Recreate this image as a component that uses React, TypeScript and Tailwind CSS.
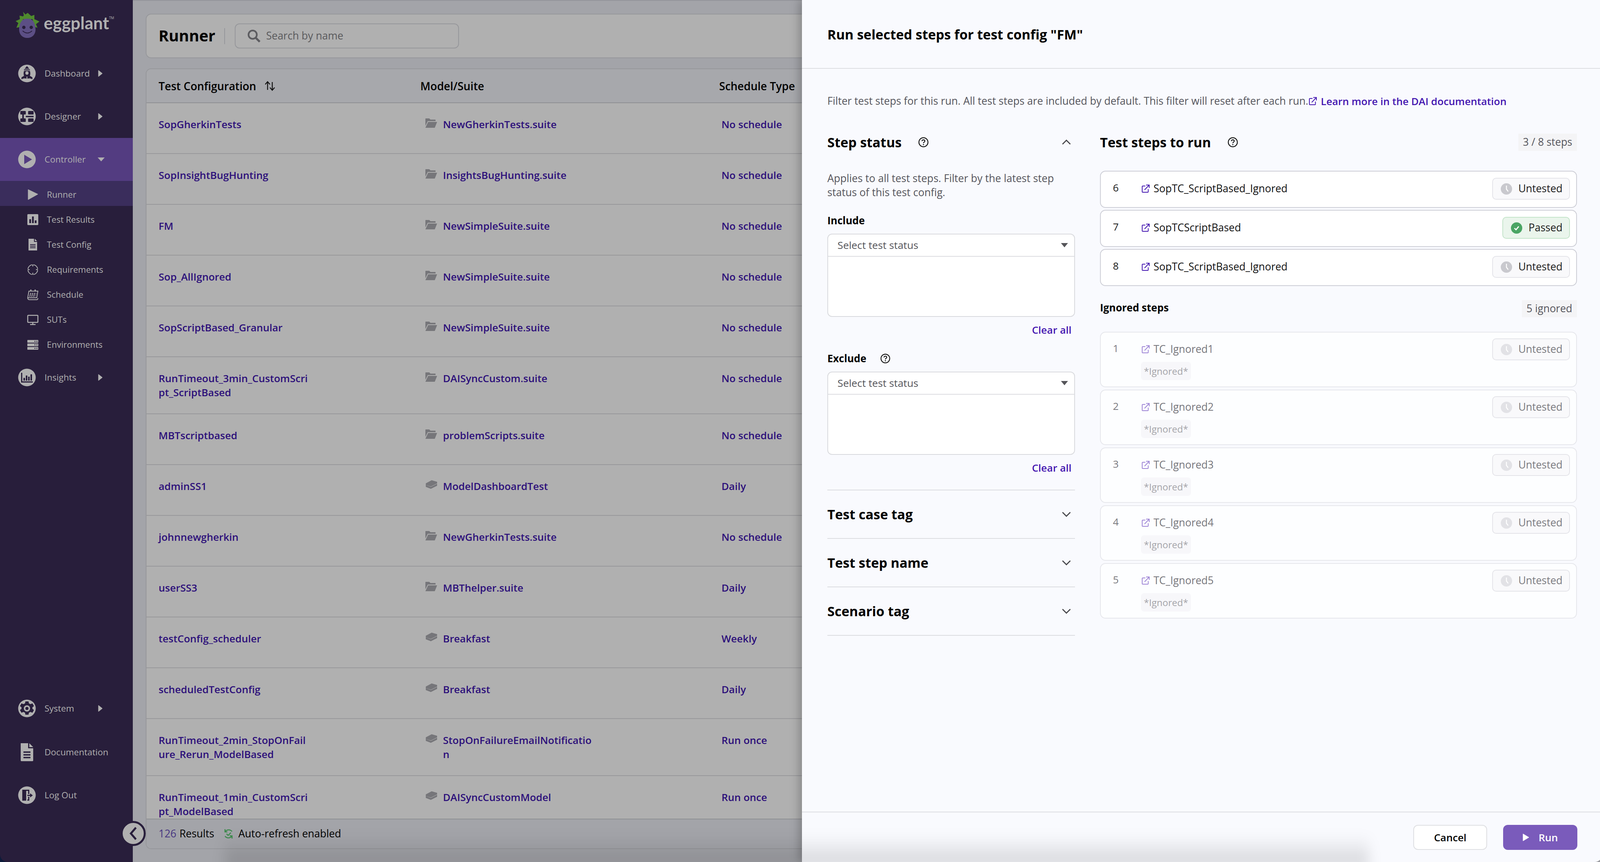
import React from "react";

const LINK = "text-[#2c0f7a]";
const rows: { a: React.ReactNode; icon: "folder" | "box"; b: React.ReactNode; c: string; tall?: boolean }[] = [
  { a: "SopGherkinTests", icon: "folder", b: "NewGherkinTests.suite", c: "No schedule" },
  { a: "SopInsightBugHunting", icon: "folder", b: "InsightsBugHunting.suite", c: "No schedule" },
  { a: "FM", icon: "folder", b: "NewSimpleSuite.suite", c: "No schedule" },
  { a: "Sop_AllIgnored", icon: "folder", b: "NewSimpleSuite.suite", c: "No schedule" },
  { a: "SopScriptBased_Granular", icon: "folder", b: "NewSimpleSuite.suite", c: "No schedule" },
  { a: <>RunTimeout_3min_CustomScri<br />pt_ScriptBased</>, icon: "folder", b: "DAISyncCustom.suite", c: "No schedule", tall: true },
  { a: "MBTscriptbased", icon: "folder", b: "problemScripts.suite", c: "No schedule" },
  { a: "adminSS1", icon: "box", b: "ModelDashboardTest", c: "Daily" },
  { a: "johnnewgherkin", icon: "folder", b: "NewGherkinTests.suite", c: "No schedule" },
  { a: "userSS3", icon: "folder", b: "MBThelper.suite", c: "Daily" },
  { a: "testConfig_scheduler", icon: "box", b: "Breakfast", c: "Weekly" },
  { a: "scheduledTestConfig", icon: "box", b: "Breakfast", c: "Daily" },
  { a: <>RunTimeout_2min_StopOnFail<br />ure_Rerun_ModelBased</>, icon: "box", b: <>StopOnFailureEmailNotificatio<br />n</>, c: "Run once", tall: true },
  { a: <>RunTimeout_1min_CustomScri<br />pt_ModelBased</>, icon: "box", b: "DAISyncCustomModel", c: "Run once", tall: true },
];

const G = "#b0b0b0";
const D = "#281e3b";

function Tri() {
  return (
    <svg width="12" height="18" viewBox="0 0 12 18"><path d="M1 1 L11 9 L1 17 Z" fill={G} stroke={G} strokeLinejoin="round" /></svg>
  );
}

function MainIcon({ name }: { name: string }) {
  const bg = name === "controller" ? "#533c81" : D;
  return (
    <svg width="46" height="46" viewBox="0 0 46 46">
      {name !== "doc" && <circle cx="23" cy="23" r="22.5" fill={G} />}
      {name === "rocket" && (
        <g fill={bg}>
          <path d="M23 4 L29 11 H17 Z" />
          <rect x="15.5" y="12.5" width="15" height="2.4" />
          <path d="M15.5 16.5 h15 C32 21 32 25 30.5 29 L37 33 V38 C32 35.5 29 35 27 36 H19 C17 35 14 35.5 9 38 V33 L15.5 29 C14 25 14 21 15.5 16.5 Z" />
          <circle cx="23" cy="22" r="4.2" fill={G} />
          <rect x="22" y="31" width="2" height="7" fill={G} />
        </g>
      )}
      {name === "designer" && (
        <g fill={bg}>
          <rect x="6" y="9" width="14" height="9" rx="1.5" />
          <rect x="26" y="9" width="14" height="9" rx="1.5" />
          <rect x="6" y="28" width="14" height="9" rx="1.5" />
          <rect x="26" y="28" width="14" height="9" rx="1.5" />
          <rect x="11" y="18" width="4" height="10" />
          <rect x="20" y="21.5" width="20" height="3.5" />
        </g>
      )}
      {name === "controller" && <path d="M16 11 L36 23 L16 35 Z" fill={bg} />}
      {name === "insights" && (
        <g fill={bg}>
          <path d="M8 11 h3 v22 h27 v3 H8 Z" />
          <rect x="14" y="24" width="4" height="7" />
          <rect x="20" y="18" width="4" height="13" />
          <rect x="26" y="21" width="4" height="10" />
          <rect x="32" y="15" width="4" height="16" />
        </g>
      )}
      {name === "gear" && (
        <g>
          <path fill={bg} d="M19 5 h8 l1 5 4 2 5-2 4 7-4 3 v4 l4 3-4 7-5-2-4 2-1 5 h-8 l-1-5-4-2-5 2-4-7 4-3 v-4 l-4-3 4-7 5 2 4-2 Z" />
          <circle cx="23" cy="23" r="8" fill={G} />
          <circle cx="23" cy="23" r="4" fill={bg} />
        </g>
      )}
      {name === "doc" && (
        <g>
          <path fill={G} d="M7 0 H26 V13 H39 V44 a2 2 0 0 1-2 2 H9 a2 2 0 0 1-2-2 Z" />
          <path fill={G} d="M29 0 L39 10 H29 Z" />
          <rect x="14" y="21" width="18" height="3.5" fill={D} />
          <rect x="14" y="28" width="18" height="3.5" fill={D} />
          <rect x="14" y="35" width="18" height="3.5" fill={D} />
        </g>
      )}
      {name === "logout" && (
        <g fill={bg}>
          <path d="M11 9 H29 V20 H26 V12 H21 V37 L11 37 Z" />
          <path d="M26 27 H29 V37 H24 V34 H26 Z" />
          <path d="M24 22 H31 V18 L38 23.5 L31 29 V25 H24 Z" />
        </g>
      )}
    </svg>
  );
}

function SubIcon({ name }: { name: string }) {
  const cls = "w-[30px] h-[30px]";
  if (name === "run")
    return <svg className={cls} viewBox="0 0 30 30"><path d="M3 2 L28 14 L3 28 Z" fill={G} stroke={G} strokeLinejoin="round" /></svg>;
  if (name === "results")
    return <svg className={cls} viewBox="0 0 30 30"><rect x="1" y="1" width="28" height="28" rx="2" fill={G} /><rect x="6" y="14" width="4.5" height="10" fill={D} /><rect x="13" y="7" width="4.5" height="17" fill={D} /><rect x="20" y="17" width="4.5" height="7" fill={D} /></svg>;
  if (name === "config")
    return <svg className={cls} viewBox="0 0 30 30"><path d="M4 0 H18 V8 H26 V30 H4 Z" fill={G} /><path d="M20 0 L26 6 H20 Z" fill={G} /><rect x="8" y="14" width="14" height="2" fill={D} /><rect x="8" y="18" width="14" height="2" fill={D} /><rect x="8" y="22" width="14" height="2" fill={D} /></svg>;
  if (name === "req")
    return <svg className={cls} viewBox="0 0 30 30" fill="none" stroke={G} strokeWidth="2"><circle cx="15" cy="15" r="12.5" /><path d="M15 0 V6 M15 24 V30 M0 15 H6 M24 15 H30" stroke={D} strokeWidth="3" /><path d="M15 2 V7 M15 23 V28 M2 15 H7 M23 15 H28" /></svg>;
  if (name === "sched")
    return <svg className={cls} viewBox="0 0 30 30" fill="none" stroke={G} strokeWidth="2"><path d="M5 6 H28 L25 23 H2 Z" /><path d="M10 2 V7 M21 2 V7" strokeWidth="3" /><path d="M2 23 Q2 28 7 28 H25 Q28 28 28 24" /><path d="M8 12 h16 M7 15.5 h16 M6 19 h16" strokeDasharray="3 2" strokeWidth="2.4" /></svg>;
  if (name === "suts")
    return <svg className={cls} viewBox="0 0 30 30" fill="none" stroke={G} strokeWidth="2.5"><rect x="2" y="4" width="26" height="18" rx="1.5" /><path d="M15 22 V27 M8 27.5 H22" /></svg>;
  return (
    <svg className={cls} viewBox="0 0 30 30">
      {[3, 12, 21].map((y) => (
        <g key={y}>
          <rect x="1" y={y} width="28" height="7" rx="1" fill={G} />
          <rect x="19" y={y + 2.5} width="3" height="2" fill={D} />
          <rect x="24" y={y + 2.5} width="3" height="2" fill={D} />
        </g>
      ))}
    </svg>
  );
}

function MainItem({ icon, label, arrow, active, h = "h-[110px]" }: { icon: string; label: string; arrow?: "right" | "down"; active?: boolean; h?: string }) {
  return (
    <div className={`relative flex items-center ${h} pl-[46px] ${active ? "bg-[#533c81]" : ""}`}>
      <MainIcon name={icon} />
      <span className="ml-[22px] text-[22.5px] font-normal text-[#b0b0b0]">{label}</span>
      {arrow === "right" && <span className="absolute left-[251px] top-1/2 -translate-y-1/2 flex"><Tri /></span>}
      {arrow === "down" && (
        <svg className="absolute left-[250px] top-1/2 -translate-y-1/2" width="18" height="10" viewBox="0 0 18 10"><path d="M0 0 H18 L9 10 Z" fill={G} /></svg>
      )}
    </div>
  );
}

function SubItem({ icon, label, active }: { icon: string; label: string; active?: boolean }) {
  return (
    <div className={`flex items-center h-[64px] pl-[69px] pt-[5px] ${active ? "bg-[#3a2d5c]" : ""}`}>
      <SubIcon name={icon} />
      <span className="ml-[21px] text-[22px] text-[#b0b0b0]">{label}</span>
    </div>
  );
}

function Sidebar() {
  return (
    <aside className="relative w-[340px] shrink-0 h-full bg-[#281e3b] flex flex-col justify-between rounded-bl-[20px]">
      <div>
        <div className="h-[133px] flex items-start pl-[39px] pt-[29px]">
          <svg width="64" height="70" viewBox="0 0 64 70">
            <path fill="#4f8a2e" d="M20 1 L26 8 L32 4 L41 12 L49 9 L49 20 L62 26 L53 33 L57 42 L50 40 L44 20 H20 L14 40 L3 42 L8 30 L1 25 L12 20 L11 11 L20 13 L22 10 Z" />
            <path fill="#5c4f85" d="M31 19 C44 17 52 30 52 46 C52 60 43 68 31 68 C19 68 10 60 10 46 C10 30 18 17 31 19 Z" />
            <circle cx="22" cy="41" r="4.3" fill={D} />
            <circle cx="41" cy="41" r="4.3" fill={D} />
            <path d="M19 50 Q31 61 43 50" fill="none" stroke={D} strokeWidth="2" />
          </svg>
          <span className="ml-[9px] mt-[-3px] font-['Lato'] font-bold text-[43.5px] leading-[64px] text-[#b0b0b0]">eggplant</span>
          <span className="text-[9px] text-[#b0b0b0] mt-[10px]">TM</span>
        </div>
        <MainItem icon="rocket" label="Dashboard" arrow="right" />
        <MainItem icon="designer" label="Designer" arrow="right" />
        <MainItem icon="controller" label="Controller" arrow="down" active />
        <SubItem icon="run" label="Runner" active />
        <SubItem icon="results" label="Test Results" />
        <SubItem icon="config" label="Test Config" />
        <SubItem icon="req" label="Requirements" />
        <SubItem icon="sched" label="Schedule" />
        <SubItem icon="suts" label="SUTs" />
        <SubItem icon="env" label="Environments" />
        <MainItem icon="insights" label="Insights" arrow="right" />
      </div>
      <div className="pb-[116px]">
        <MainItem icon="gear" label="System" arrow="right" h="h-[114px]" />
        <MainItem icon="doc" label="Documentation" h="h-[110px]" />
        <MainItem icon="logout" label="Log Out" h="h-[110px]" />
      </div>
    </aside>
  );
}

function ItemIcon({ kind }: { kind: "folder" | "box" }) {
  if (kind === "folder")
    return (
      <svg width="32" height="26" viewBox="0 0 32 26">
        <path d="M1 2 a1 1 0 0 1 1-1 H11 L14 4 H26 a1 1 0 0 1 1 1 V8 H7 L1 20 Z" fill="#76767a" />
        <path d="M8 10 H31 L25 25 H1 Z" fill="#76767a" />
      </svg>
    );
  return (
    <svg width="32" height="24" viewBox="0 0 32 24">
      <path d="M2 9 L17 1 L31 5 L31 9 L15 17 L2 13 Z" fill="#76767a" />
      <path d="M2 13 L15 18 L31 10 V15 L15 23 L2 18 Z" fill="#76767a" />
    </svg>
  );
}

function Background() {
  return (
    <main className="flex-1 h-full bg-[#a3a4a9] border-t-2 border-[#93949a] pt-[33px] pl-[33px] flex flex-col gap-[26px] min-w-0 overflow-hidden">
      <section className="h-[114px] shrink-0 rounded-l-[14px] bg-[#b0b0b0] border-2 border-r-0 border-[#96979b] flex items-center pl-[31px]">
        <h1 className="text-[39.5px] font-bold text-black leading-none">Runner</h1>
        <div className="ml-[23px] w-[2px] h-[41px] bg-[#96979b]" />
        <div className="ml-[25px] w-[574px] h-[64px] rounded-[12px] border-2 border-[#96979b] flex items-center pl-[30px]">
          <svg width="34" height="34" viewBox="0 0 32 32" fill="none" stroke="#5c5c60" strokeWidth="4"><circle cx="13" cy="13" r="10" /><path d="M21 21 L30 30" strokeWidth="5" /></svg>
          <span className="ml-[14px] text-[26.5px] text-[#59595c]">Search by name</span>
        </div>
      </section>
      <section className="h-[1998px] shrink-0 rounded-l-[14px] border-2 border-r-0 border-[#96979b] bg-[#b0b0b0] flex flex-col overflow-hidden">
        <div className="h-[87px] shrink-0 flex items-center bg-[#a7a8ac] border-b-2 border-[#8f9094] text-[28px] font-semibold text-black">
          <div className="w-[701px] pl-[31px] flex items-center">
            <span>Test Configuration</span>
            <svg className="ml-[20px]" width="30" height="30" viewBox="0 0 30 30" fill="none" stroke="#111" strokeWidth="2.4"><path d="M9 25 V5 M3 11 L9 4 L15 11" /><path d="M21 5 V25 M15 19 L21 26 L27 19" /></svg>
          </div>
          <div className="w-[765px]">Model/Suite</div>
          <div>Schedule Type</div>
        </div>
        <div className="flex-1 min-h-0 overflow-hidden">
          {rows.map((r, i) => (
            <div key={i} className={`flex items-start border-b-2 border-[#98989b] pt-[36px] text-[26px] font-semibold leading-[36px] ${LINK} ${r.tall ? "h-[146px]" : "h-[130px]"}`}>
              <div className="w-[701px] pl-[31px]">{r.a}</div>
              <div className="w-[771px] pl-[12px] flex items-start">
                <span className="w-[46px] shrink-0 pt-[2px]"><ItemIcon kind={r.icon} /></span>
                <span>{r.b}</span>
              </div>
              <div>{r.c}</div>
            </div>
          ))}
        </div>
        <div className="h-[76px] shrink-0 bg-[#a3a4a9] border-t-2 border-[#8f9094] flex items-center pl-[31px] text-[26.5px] font-medium text-black">
          <span className="text-[#473681]">126</span>
          <span className="ml-[8px]">Results</span>
          <svg className="ml-[24px]" width="26" height="28" viewBox="0 0 26 28" fill="none" stroke="#3c8a4c" strokeWidth="2.6">
            <path d="M4 9 A11 11 0 0 1 22 8 M4 2 V9 H10" />
            <path d="M22 19 A11 11 0 0 1 4 20 M22 26 V19 H16" />
            <path d="M8 14 L12 18 L19 11" />
          </svg>
          <span className="ml-[12px]">Auto-refresh enabled</span>
        </div>
      </section>
    </main>
  );
}

function Help({ size = 26 }: { size?: number }) {
  return (
    <svg width={size} height={size} viewBox="0 0 26 26" fill="none">
      <circle cx="13" cy="13" r="11.6" stroke="#111" strokeWidth="2.2" />
      <path d="M9.3 10.2 C9.3 7.9 11 6.8 13 6.8 C15.1 6.8 16.7 8 16.7 10 C16.7 12.6 13 12.8 13 15.6" stroke="#111" strokeWidth="2.2" />
      <circle cx="13" cy="19" r="1.5" fill="#111" />
    </svg>
  );
}

function Ext({ color = "#4315b0" }: { color?: string }) {
  return (
    <svg width="20" height="22" viewBox="0 0 20 22" fill="none" stroke={color} strokeWidth="2">
      <path d="M9 4 H2.5 A1.5 1.5 0 0 0 1 5.5 V18.5 A1.5 1.5 0 0 0 2.5 20 H15 A1.5 1.5 0 0 0 16.5 18.5 V12" />
      <path d="M7 14 L18.5 2 M11 1.5 H19 V9" />
    </svg>
  );
}

function Clock({ fill = "#c9c9ce" }: { fill?: string }) {
  return (
    <svg width="29" height="29" viewBox="0 0 29 29">
      <circle cx="14.5" cy="14.5" r="14.5" fill={fill} />
      <path d="M14.5 6 V15 L19 21" fill="none" stroke="#fff" strokeWidth="2.4" />
    </svg>
  );
}

function Badge({ status, faded }: { status: "Untested" | "Passed"; faded?: boolean }) {
  const passed = status === "Passed";
  return (
    <div className={`h-[56px] rounded-[10px] border-2 flex items-center pl-[20px] pr-[17px] ${passed ? "bg-[#eaf5ec] border-[#c4e4ca]" : "bg-[#f9f9fb] border-[#e4e4e9]"}`}>
      {passed ? (
        <svg width="29" height="29" viewBox="0 0 29 29"><circle cx="14.5" cy="14.5" r="14.5" fill="#4aa564" /><path d="M9 15 L13 19 L20 10.5" fill="none" stroke="#fff" strokeWidth="2.8" /></svg>
      ) : (
        <Clock fill={faded ? "#e2e2e6" : "#c9c9ce"} />
      )}
      <span className={`ml-[16px] text-[26.5px] font-medium ${faded ? "text-[#7a7a7f]" : "text-[#1a1a1a]"}`}>{status}</span>
    </div>
  );
}

function Step({ n, name, status }: { n: number; name: string; status: "Untested" | "Passed" }) {
  return (
    <div className="h-[95px] rounded-[14px] border-2 border-[#cdced6] bg-white flex items-start pl-[31px] pr-[16px] pt-[16px]">
      <span className="w-[74px] text-[26px] leading-[56px] text-[#1a1a1a] -mt-[3px]">{n}</span>
      <span className="flex items-center h-[56px] flex-1">
        <Ext />
        <span className="ml-[10px] text-[26.5px] font-medium text-[#111]">{name}</span>
      </span>
      <Badge status={status} />
    </div>
  );
}

function Ignored({ n }: { n: number }) {
  return (
    <div className="h-[142px] rounded-[14px] border-2 border-[#e6e7ec] bg-white/70 flex items-start pl-[31px] pr-[16px] pt-[15px]">
      <span className="w-[74px] text-[26px] leading-[54px] text-[#7a7a7f] -mt-[2px]">{n}</span>
      <div className="flex-1">
        <span className="flex items-center h-[56px]">
          <Ext color="#9e85d6" />
          <span className="ml-[10px] text-[26.5px] font-medium text-[#76767c]">TC_Ignored{n}</span>
        </span>
        <div className="-ml-[2px] mt-[4px] w-[128px] h-[47px] rounded-[8px] bg-[#f7f7fa] text-[24px] text-[#a4a4a9] font-medium flex items-center justify-center">*Ignored*</div>
      </div>
      <Badge status="Untested" faded />
    </div>
  );
}

function Multi({ label, help, mt }: { label: string; help?: boolean; mt: string }) {
  return (
    <div className={mt}>
      <div className="h-[40px] flex items-center text-[26px] font-bold text-black">
        {label}
        {help && <span className="ml-[36px] flex"><Help size={25} /></span>}
      </div>
      <div className="mt-[14px] h-[213px] rounded-[12px] border-2 border-[#d9dade] bg-white">
        <div className="h-[57px] border-b-2 border-[#dcdde1] flex items-center justify-between pl-[24px] pr-[16px]">
          <span className="text-[26.3px] text-[#55555a]">Select test status</span>
          <svg width="18" height="11" viewBox="0 0 18 11"><path d="M0 0 H18 L9 11 Z" fill="#55555a" /></svg>
        </div>
      </div>
      <div className="h-[66px] flex items-center justify-end pr-[9px] text-[26px] font-semibold text-[#4315b0]">Clear all</div>
    </div>
  );
}

function Collapsed({ label }: { label: string }) {
  return (
    <div className="h-[124px] border-b-2 border-[#dcdde1] flex items-center justify-between pr-[10px]">
      <span className="text-[34px] font-bold text-black">{label}</span>
      <svg width="24" height="16" viewBox="0 0 24 16" fill="none" stroke="#45454a" strokeWidth="2.8"><path d="M2 3 L12 13 L22 3" /></svg>
    </div>
  );
}

function Drawer() {
  return (
    <aside className="absolute right-0 top-0 bottom-0 w-[2049px] bg-[#f9fafe] flex flex-col rounded-br-[20px] shadow-[-6px_0_24px_rgba(0,0,0,0.25)]">
      <div className="h-[176px] shrink-0 border-b-2 border-[#dddee2] pl-[65px] pt-[64px]">
        <h2 className="text-[34px] font-bold leading-[48px] text-black">Run selected steps for test config "FM"</h2>
      </div>
      <div className="flex-1 min-h-0 pl-[65px] pr-[65px]">
        <p className="mt-[65px] h-[36px] flex items-center text-[26.6px] text-[#55555c] whitespace-nowrap">
          Filter test steps for this run. All test steps are included by default. This filter will reset after each run.
          <span className="ml-[2px] mr-[10px] flex"><Ext /></span>
          <span className="text-[26px] font-semibold text-[#4315b0]">Learn more in the DAI documentation</span>
        </p>
        <div className="mt-[58px] flex gap-[64px]">
          <div className="w-[634px] shrink-0">
            <div className="h-[58px] flex items-center">
              <span className="text-[34px] font-bold text-black">Step status</span>
              <span className="ml-[43px] flex"><Help /></span>
              <svg className="ml-auto mr-[10px]" width="24" height="16" viewBox="0 0 24 16" fill="none" stroke="#45454a" strokeWidth="2.8"><path d="M2 13 L12 3 L22 13" /></svg>
            </div>
            <p className="mt-[45px] text-[26.6px] leading-[36px] text-[#55555c] whitespace-nowrap">Applies to all test steps. Filter by the latest step<br />status of this test config.</p>
            <Multi label="Include" mt="mt-[34px]" />
            <Multi label="Exclude" help mt="mt-[20px]" />
            <div className="border-b-2 border-[#dcdde1] mt-[23px]" />
            <Collapsed label="Test case tag" />
            <Collapsed label="Test step name" />
            <Collapsed label="Scenario tag" />
          </div>
          <div className="flex-1 min-w-0">
            <div className="h-[58px] flex items-center">
              <span className="text-[34px] font-bold text-black">Test steps to run</span>
              <span className="ml-[43px] flex"><Help /></span>
              <span className="ml-auto h-[44px] px-[12px] flex items-center bg-[#f4f4f6] text-[26.5px] font-medium text-[#55555c]">3 / 8 steps</span>
            </div>
            <div className="mt-[44px] flex flex-col gap-[5px]">
              <Step n={6} name="SopTC_ScriptBased_Ignored" status="Untested" />
              <Step n={7} name="SopTCScriptBased" status="Passed" />
              <Step n={8} name="SopTC_ScriptBased_Ignored" status="Untested" />
            </div>
            <div className="mt-[36px] h-[44px] flex items-center justify-between">
              <span className="text-[26px] font-bold text-black -mt-[5px]">Ignored steps</span>
              <span className="h-[44px] px-[12px] flex items-center bg-[#f4f4f6] text-[26.5px] font-medium text-[#55555c]">5 ignored</span>
            </div>
            <div className="mt-[37px] flex flex-col gap-[6px]">
              {[1, 2, 3, 4, 5].map((n) => <Ignored key={n} n={n} />)}
            </div>
          </div>
        </div>
      </div>
      <div className="h-[129px] shrink-0 border-t-2 border-[#dddee2] flex items-start justify-end gap-[41px] pr-[64px] pt-[32px]">
        <button className="w-[189px] h-[64px] rounded-[12px] border-2 border-[#dedfe2] bg-white text-[26px] font-semibold text-black">Cancel</button>
        <button className="w-[190px] h-[64px] rounded-[12px] bg-[#7a5bbb] text-[26px] font-semibold text-white flex items-center justify-center gap-[24px]">
          <svg width="17" height="20" viewBox="0 0 17 20"><path d="M1 1 L16 10 L1 19 Z" fill="#fff" stroke="#fff" strokeLinejoin="round" /></svg>
          Run
        </button>
      </div>
    </aside>
  );
}

export default function App() {
  return (
    <div className="relative w-[4102px] h-[2206px] bg-[#0d1b3a] overflow-hidden font-['Open_Sans',sans-serif]">
      <div className="flex w-full h-full">
        <Sidebar />
        <Background />
      </div>
      <Drawer />
      <div className="absolute left-[575px] w-[2930px] -bottom-[14px] h-[84px] bg-linear-to-t from-black/15 to-transparent blur-[16px] pointer-events-none" />
      <button className="absolute left-[309px] top-[2101px] w-[64px] h-[64px] rounded-full bg-[#b0b0b0] border-[5px] border-[#281e3b] flex items-center justify-center">
        <svg width="22" height="36" viewBox="0 0 22 36" fill="none" stroke="#281e3b" strokeWidth="5"><path d="M18 3 L5 18 L18 33" /></svg>
      </button>
    </div>
  );
}
